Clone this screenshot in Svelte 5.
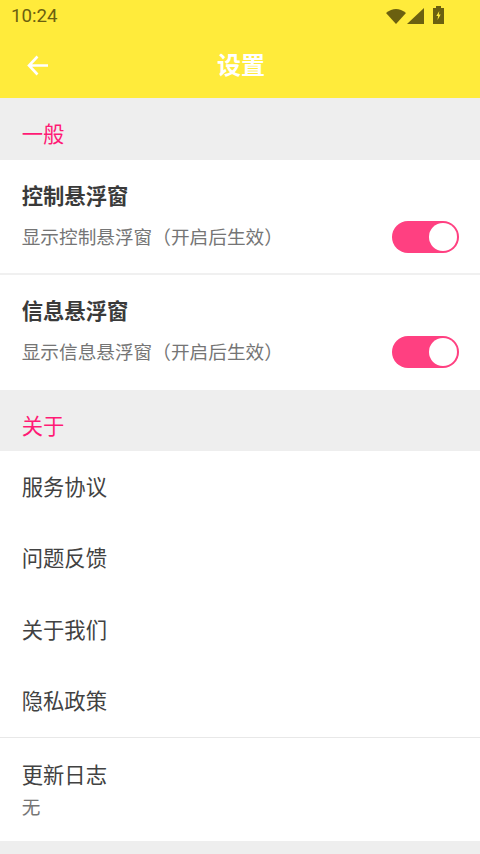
<script>
	const general = [
		{ title: '控制悬浮窗', desc: '显示控制悬浮窗（开启后生效）' },
		{ title: '信息悬浮窗', desc: '显示信息悬浮窗（开启后生效）' }
	];
	const about = ['服务协议', '问题反馈', '关于我们', '隐私政策'];
</script>

<main>
	<header>
		<div class="status">
			<span class="time">10:24</span>
			<div class="status-icons">
				<svg width="20" height="16" viewBox="0 0 20 16"><path d="M0 5 Q10 -3 20 5 L10 16 Z" fill="#6b6010" /></svg>
				<svg class="signal" width="17" height="16" viewBox="0 0 17 16"><path d="M0 16 L17 0 V16 Z" fill="#6b6010" /></svg>
				<svg class="battery" width="11" height="18" viewBox="0 0 11 18">
					<path d="M3 0 H8 V2 H11 V18 H0 V2 H3 Z" fill="#6b6010" />
					<path d="M6.3 5 L3.3 10 H5.1 L4.5 14 L7.7 8.6 H5.8 Z" fill="#ffeb3b" />
				</svg>
			</div>
		</div>
		<div class="toolbar">
			<svg class="back" width="24" height="24" viewBox="0 0 24 24">
				<path d="M23 12.5 H4 M12.5 3.5 L4 12.5 L12.5 21.5" fill="none" stroke="#fff" stroke-width="2.6" />
			</svg>
			<h1>设置</h1>
		</div>
	</header>

	<div class="section first">一般</div>
	{#each general as item, i}
		<div class="switch-row" class:ruled={i === 0}>
			<div class="switch-text">
				<div class="title">{item.title}</div>
				<div class="desc">{item.desc}</div>
			</div>
			<div class="toggle"><span class="knob"></span></div>
		</div>
	{/each}

	<div class="section">关于</div>
	{#each about as label}
		<div class="link">{label}</div>
	{/each}
	<div class="changelog">
		<div class="name">更新日志</div>
		<div class="value">无</div>
	</div>
</main>

<style>
	:global(body) {
		margin: 0;
		background: #eeeeee;
	}

	main {
		height: 854px;
		overflow: hidden;
		background: #eeeeee;
		font-family: 'Roboto', 'Noto Sans CJK SC', sans-serif;
	}

	header {
		height: 98px;
		background: #ffeb3b;
	}

	.status {
		height: 32px;
		display: flex;
		align-items: center;
		justify-content: space-between;
		padding: 0 36px 0 11px;
	}

	.time {
		font-size: 18.67px;
		color: #6b6010;
	}

	.status-icons {
		display: flex;
		align-items: center;
		gap: 1.5px;
	}

	.status-icons .battery {
		margin-left: 7.5px;
		margin-top: -2px;
	}

	.toolbar {
		height: 66px;
		display: flex;
		align-items: center;
		padding-left: 25px;
	}

	.toolbar h1 {
		margin: -3px 0 0 168px;
		font-size: 24px;
		font-weight: 700;
		color: #fff;
	}

	.section {
		height: 61px;
		box-sizing: border-box;
		display: flex;
		align-items: center;
		padding: 7px 0 0 21.67px;
		font-size: 21.33px;
		color: #ff1a75;
		background: #eeeeee;
	}

	.section.first {
		height: 62px;
	}

	.switch-row {
		height: 115px;
		box-sizing: border-box;
		display: flex;
		align-items: flex-start;
		justify-content: space-between;
		padding: 0 21px 0 21.67px;
		background: #fff;
	}

	.switch-row.ruled {
		border-bottom: 2px solid #f0f0f0;
	}

	.switch-text {
		padding-top: 19px;
	}

	.title {
		font-size: 21.33px;
		font-weight: 700;
		color: #3a3a3a;
	}

	.desc {
		margin-top: 12px;
		font-size: 18.67px;
		color: #757575;
	}

	.toggle {
		width: 67px;
		height: 32px;
		margin-top: 61px;
		border-radius: 16px;
		background: #ff4081;
		display: flex;
		align-items: center;
		justify-content: flex-end;
		padding-right: 2px;
		box-sizing: border-box;
	}

	.knob {
		width: 28px;
		height: 28px;
		border-radius: 50%;
		background: #fff;
	}

	.link {
		height: 71.5px;
		box-sizing: border-box;
		display: flex;
		align-items: center;
		padding: 0 0 3px 21.67px;
		font-size: 21.33px;
		color: #424242;
		background: #fff;
	}

	.changelog {
		height: 104px;
		box-sizing: border-box;
		border-top: 1px solid #e8e8e8;
		padding: 20px 0 0 21.67px;
		background: #fff;
	}

	.name {
		font-size: 21.33px;
		color: #424242;
	}

	.value {
		margin-top: 3px;
		font-size: 18.67px;
		color: #757575;
	}
</style>
